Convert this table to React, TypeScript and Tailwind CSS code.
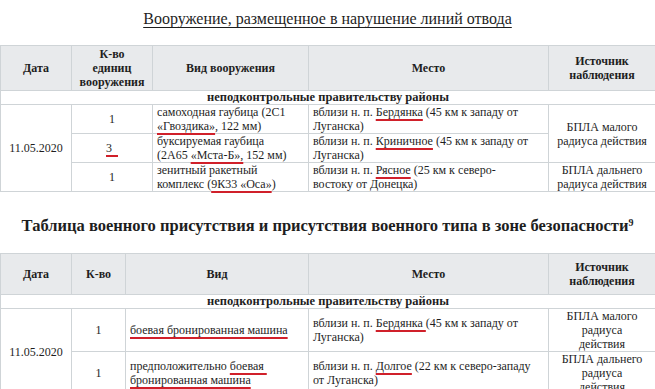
import React from 'react';

const F: React.CSSProperties = { fontFamily: '"Liberation Serif", serif' };

function Red({ children }: { children: React.ReactNode }) {
    return (
        <span className="underline decoration-[#d0202a] decoration-[1.5px] underline-offset-[3px]">{children}</span>
    );
}

const th = 'border border-[#cfd4d7] bg-[#e8eaec] px-1 text-center align-middle font-bold text-[12px] leading-[14px]';
const td = 'border border-[#cfd4d7] bg-white px-1 align-middle text-[12px] leading-[14px]';

function Th({ children }: { children: React.ReactNode }) {
    return <th className={th} style={F}>{children}</th>;
}

function Td({ children, center, rowSpan }: { children: React.ReactNode; center?: boolean; rowSpan?: number }) {
    return (
        <td rowSpan={rowSpan} className={td + (center ? ' text-center' : ' text-left')} style={F}>
            {children}
        </td>
    );
}

function SubHeader() {
    return (
        <tr>
            <td colSpan={5} className="border border-[#cfd4d7] bg-white text-center font-bold text-[12.5px] leading-[13px]" style={F}>
                неподконтрольные правительству районы
            </td>
        </tr>
    );
}

export default function App() {
    return (
        <div className="w-[655px] h-[389px] overflow-hidden bg-white text-[#1e1e1e]" style={F}>
            <h2 className="pt-[10px] text-center text-[16px] leading-[18px]" style={F}>
                <span className="underline decoration-1 underline-offset-[3px]">Вооружение, размещенное в нарушение линий отвода</span>
            </h2>

            {/* Table 1 */}
            <table className="mt-[17px] w-[655px] table-fixed border-collapse">
                <colgroup>
                    <col className="w-[71px]" />
                    <col className="w-[81px]" />
                    <col className="w-[156px]" />
                    <col className="w-[240px]" />
                    <col className="w-[107px]" />
                </colgroup>
                <thead>
                    <tr className="h-[45px]">
                        <Th>Дата</Th>
                        <Th>К-во<br />единиц<br />вооружения</Th>
                        <Th>Вид вооружения</Th>
                        <Th>Место</Th>
                        <Th>Источник<br />наблюдения</Th>
                    </tr>
                </thead>
                <tbody>
                    <SubHeader />
                    <tr className="h-[29px]">
                        <Td rowSpan={3} center>11.05.2020</Td>
                        <Td center>1</Td>
                        <Td>самоходная гаубица (2С1<br /><Red>«Гвоздика»</Red>, 122 мм)</Td>
                        <Td>вблизи н. п. <Red>Бердянка</Red> (45 км к западу от<br />Луганска)</Td>
                        <Td rowSpan={2} center>БПЛА малого<br />радиуса действия</Td>
                    </tr>
                    <tr className="h-[28px]">
                        <Td center><Red>3&nbsp;&nbsp;</Red></Td>
                        <Td>буксируемая гаубица<br />(2А65 <Red>«Мста-Б»,</Red> 152 мм)</Td>
                        <Td>вблизи н. п. <Red>Криничное</Red> (45 км к западу от<br />Луганска)</Td>
                    </tr>
                    <tr className="h-[28px]">
                        <Td center>1</Td>
                        <Td>зенитный ракетный<br />комплекс (<Red>9К33 «Оса»</Red>)</Td>
                        <Td>вблизи н. п. <Red>Рясное</Red> (25 км к северо-<br />востоку от Донецка)</Td>
                        <Td center>БПЛА дальнего<br />радиуса действия</Td>
                    </tr>
                </tbody>
            </table>

            <h2 className="mt-[25px] text-center text-[16.5px] font-bold leading-[18px]" style={F}>
                Таблица военного присутствия и присутствия военного типа в зоне безопасности<sup className="text-[10px]">9</sup>
            </h2>

            {/* Table 2 */}
            <table className="mt-[18px] w-[655px] table-fixed border-collapse">
                <colgroup>
                    <col className="w-[71px]" />
                    <col className="w-[54px]" />
                    <col className="w-[183px]" />
                    <col className="w-[240px]" />
                    <col className="w-[107px]" />
                </colgroup>
                <thead>
                    <tr className="h-[41px]">
                        <Th>Дата</Th>
                        <Th>К-во</Th>
                        <Th>Вид</Th>
                        <Th>Место</Th>
                        <Th>Источник<br />наблюдения</Th>
                    </tr>
                </thead>
                <tbody>
                    <SubHeader />
                    <tr className="h-[43px]">
                        <Td rowSpan={2} center>11.05.2020</Td>
                        <Td center>1</Td>
                        <Td><Red>боевая бронированная машина</Red></Td>
                        <Td>вблизи н. п. <Red>Бердянка&nbsp;</Red>(45 км к западу от<br />Луганска)</Td>
                        <Td center>БПЛА малого<br />радиуса<br />действия</Td>
                    </tr>
                    <tr className="h-[43px]">
                        <Td center>1</Td>
                        <Td>предположительно <Red>боевая&nbsp;</Red><br /><Red>бронированная машина</Red></Td>
                        <Td>вблизи н. п. <Red>Долгое</Red> (22 км к северо-западу<br />от Луганска)</Td>
                        <Td center>БПЛА дальнего<br />радиуса<br />действия</Td>
                    </tr>
                </tbody>
            </table>
        </div>
    );
}
